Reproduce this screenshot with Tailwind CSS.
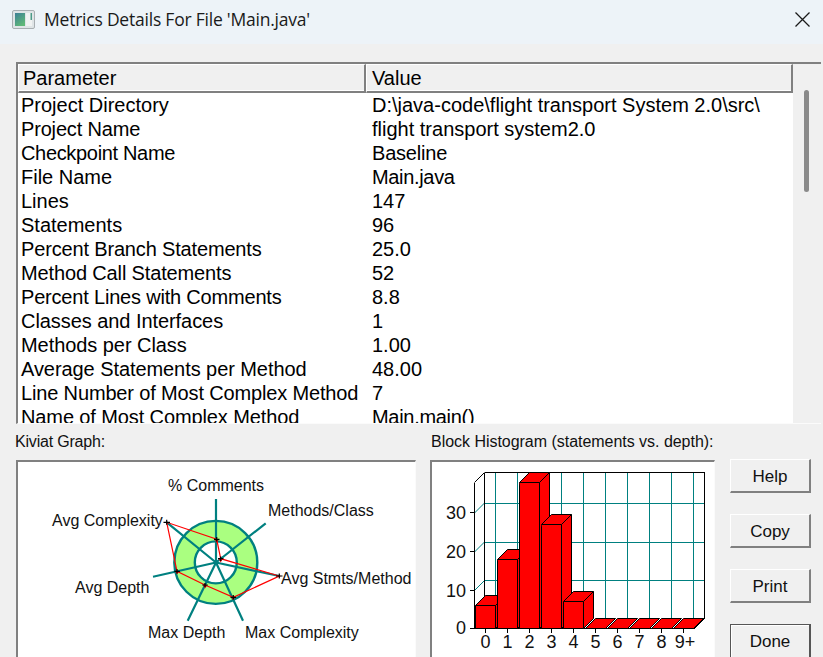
<!DOCTYPE html>
<html><head><meta charset="utf-8"><script src="https://cdn.jsdelivr.net/npm/@tailwindcss/browser@4"></script></head>
<body class="m-0">
<div class="w-[823px] h-[657px] overflow-hidden bg-[#f0f0f0] flex flex-col font-['Liberation_Sans',Arial,sans-serif] text-black">
  <div class="h-[44px] shrink-0 bg-[#edf3f8] flex items-center pl-[12px] pr-[13px] pb-[5px]">
    <svg class="w-[23px] h-[19px] shrink-0" viewBox="0 0 23 19">
      <defs><linearGradient id="g" x1="0" y1="0" x2="0.6" y2="1"><stop offset="0" stop-color="#3d7f96"/><stop offset="1" stop-color="#5fb878"/></linearGradient></defs>
      <rect x="0.5" y="0.5" width="22" height="18" rx="1.5" fill="#dfe4e6" stroke="#a8aeb2"/>
      <rect x="3" y="3" width="10" height="13" fill="url(#g)"/>
      <rect x="14" y="3" width="6" height="13" fill="#f0f2f2"/>
      <rect x="18.5" y="3" width="1.5" height="7" fill="#4b9a88"/>
    </svg>
    <span class="ml-[9px] text-[17.5px] leading-none font-['Open_Sans',sans-serif] text-[#1a1a1a] tracking-[-0.22px]">Metrics Details For File 'Main.java'</span>
    <svg class="ml-auto w-[15px] h-[15px]" viewBox="0 0 15 15"><path d="M0.5 0.5 L14.5 14.5 M14.5 0.5 L0.5 14.5" stroke="#1a1a1a" stroke-width="1.3" fill="none"/></svg>
  </div>
  <div class="pl-[16px] pt-[18px] flex flex-col">
    <div class="w-[805px] h-[362px] flex border-t-2 border-l-2 border-t-[#808080] border-l-[#808080] border-b border-b-[#fbfbfb] overflow-hidden">
      <div class="w-[775px] shrink-0 bg-white flex flex-col text-[20px]">
        <div class="grid grid-cols-[348px_1fr] h-[26px] bg-[#f0f0f0] shrink-0">
          <div class="border-t border-l border-white border-r-2 border-b-2 border-r-[#808080] border-b-[#808080] pl-[4px] leading-[26px]">Parameter</div>
          <div class="border-t border-l border-white border-r-2 border-b-2 border-r-[#808080] border-b-[#808080] pl-[5px] leading-[26px]">Value</div>
        </div>
        <div class="pt-[3px] grid grid-cols-[347px_1fr] auto-rows-[24px] leading-[24px] pl-[3px]">
          <div>Project Directory</div><div class="pl-[4px]">D:\java-code\flight transport System 2.0\src\</div>
          <div class="tracking-[-0.17px]">Project Name</div><div class="pl-[4px]">flight transport system2.0</div>
          <div class="tracking-[-0.33px]">Checkpoint Name</div><div class="pl-[4px] tracking-[-0.2px]">Baseline</div>
          <div>File Name</div><div class="pl-[4px] tracking-[-0.33px]">Main.java</div>
          <div>Lines</div><div class="pl-[4px]">147</div>
          <div>Statements</div><div class="pl-[4px]">96</div>
          <div class="tracking-[-0.16px]">Percent Branch Statements</div><div class="pl-[4px]">25.0</div>
          <div class="tracking-[-0.14px]">Method Call Statements</div><div class="pl-[4px]">52</div>
          <div class="tracking-[-0.19px]">Percent Lines with Comments</div><div class="pl-[4px]">8.8</div>
          <div class="tracking-[-0.06px]">Classes and Interfaces</div><div class="pl-[4px]">1</div>
          <div class="tracking-[-0.06px]">Methods per Class</div><div class="pl-[4px]">1.00</div>
          <div class="tracking-[-0.07px]">Average Statements per Method</div><div class="pl-[4px]">48.00</div>
          <div class="tracking-[-0.15px]">Line Number of Most Complex Method</div><div class="pl-[4px]">7</div>
          <div class="tracking-[-0.11px]">Name of Most Complex Method</div><div class="pl-[4px] tracking-[-0.3px]">Main.main()</div>
        </div>
      </div>
      <div class="flex-1 flex justify-center pl-[2px] pr-[1px] pt-[26px]">
        <div class="w-[5px] h-[102px] rounded-full bg-[#8a8a8a] ml-[-2px]"></div>
      </div>
    </div>
    <div class="flex text-[16px] text-[#111]">
      <div class="w-[400px] shrink-0">
        <div class="h-[36px] leading-[36px] -ml-[1px] tracking-[-0.2px]">Kiviat Graph:</div>
        <div class="h-[240px] border-t-2 border-l-2 border-t-[#808080] border-l-[#808080] border-r border-r-[#fbfbfb] bg-white">
          <svg class="block -mt-[2px] -ml-[2px]" width="400" height="200" viewBox="16 460 400 200" font-size="16" fill="#111" font-family="'Liberation Sans',Arial,sans-serif">
            <circle cx="215.8" cy="562.4" r="41.5" fill="#aaff80" stroke="#008080" stroke-width="2.4"/>
            <circle cx="215.8" cy="562.4" r="21" fill="#fff" stroke="#008080" stroke-width="2.4"/>
            <path d="M216 562.5 L216 499 M216 562.5 L265.7 523.3 M216 562.5 L279.3 576 M216 562.5 L243 620.7 M216 562.5 L187.7 620.7 M216 562.5 L153 576.7 M216 562.5 L166.7 522.3" stroke="#008080" stroke-width="2.2" fill="none"/>
            <polygon points="216.7,539.3 220.7,558.7 279.3,576 233.3,597.3 205,585 177,571.3 166.7,522.3" fill="none" stroke="#ff0000" stroke-width="1.2"/>
            <g fill="#f00000">
              <path d="M214.5 539L219 539L216.7 543Z M218.5 558.5L223 558.5L220.7 562.5Z M231 597L235.5 597L233.3 600Z M203 585L207.5 585L205 588.5Z M175 571L179.5 571L177 574.5Z"/>
            </g>
            <path d="M214 539.3 H219.5 M216.7 537 V541.5 M218 558.7 H223.5 M220.7 556.5 V561 M276 576 H282.5 M279.3 573.5 V578.5 M230.5 597.3 H236 M233.3 595 V599.5 M202.3 585 H207.8 M205 583 V587 M174.3 571.3 H179.8 M177 569 V573.5 M163.5 522.3 H170 M166.7 519.8 V524.8" fill="none" stroke="#000" stroke-width="1.2"/>
            <text x="168" y="491">% Comments</text>
            <text x="268" y="516">Methods/Class</text>
            <text x="52" y="526">Avg Complexity</text>
            <text x="281" y="584">Avg Stmts/Method</text>
            <text x="75" y="593">Avg Depth</text>
            <text x="148" y="638">Max Depth</text>
            <text x="245" y="638">Max Complexity</text>
          </svg>
        </div>
      </div>
      <div class="w-[285px] ml-[14px] shrink-0">
        <div class="h-[36px] leading-[36px] pl-[1px] tracking-[-0.03px]">Block Histogram (statements vs. depth):</div>
        <div class="h-[240px] border-t-2 border-l-2 border-t-[#808080] border-l-[#808080] border-r border-r-[#fbfbfb] bg-white">
          <svg class="block -mt-[2px] -ml-[2px]" width="285" height="200" viewBox="430 460 285 200" font-size="16" fill="#111" font-family="'Liberation Sans',Arial,sans-serif" shape-rendering="crispEdges">
            <g stroke="#008080" stroke-width="1" fill="none">
              <path d="M495.5 472V618 M517.5 472V618 M539.5 472V618 M561.5 472V618 M583.5 472V618 M605.5 472V618 M627.5 472V618 M649.5 472V618 M671.5 472V618 M693.5 472V618"/>
              <path d="M484 503.5H704 M484 542.5H704 M484 580.5H704"/>
            </g>
            <g stroke="#008080" stroke-width="1" fill="none" shape-rendering="auto">
              <path d="M474.5 513L484.5 503 M474.5 552L484.5 542 M474.5 590.5L484.5 580.5"/>
            </g>
            <g fill="none" stroke="#000" stroke-width="1">
              <path d="M484.5 472.5H704.5V618.5H694 M484.5 472.5V618"/>
              <path d="M474.5 482.5V628.5H694.5 M470 512.5H474.5 M470 551.5H474.5 M470 590.5H474.5 M470 628.5H474.5 M485.5 628V633 M507.5 628V633 M529.5 628V633 M551.5 628V633 M573.5 628V633 M595.5 628V633 M617.5 628V633 M639.5 628V633 M661.5 628V633 M683.5 628V633"/>
              <path shape-rendering="auto" d="M474.5 482.5L484.5 472.5 M694.5 628.5L704.5 618.5"/>
            </g>
            <g fill="#ff0000" stroke="#000" stroke-width="1" shape-rendering="geometricPrecision">
              <path d="M475.5 605.5L485.5 595.5H505.5V618.5L495.5 628.5H475.5Z"/><path d="M475.5 605.5H495.5V628.5 M495.5 605.5L505.5 595.5"/>
              <path d="M497.5 559.5L507.5 549.5H527.5V618.5L517.5 628.5H497.5Z"/><path d="M497.5 559.5H517.5V628.5 M517.5 559.5L527.5 549.5"/>
              <path d="M519.5 482.5L529.5 472.5H549.5V618.5L539.5 628.5H519.5Z"/><path d="M519.5 482.5H539.5V628.5 M539.5 482.5L549.5 472.5"/>
              <path d="M541.5 524.5L551.5 514.5H571.5V618.5L561.5 628.5H541.5Z"/><path d="M541.5 524.5H561.5V628.5 M561.5 524.5L571.5 514.5"/>
              <path d="M563.5 601.5L573.5 591.5H593.5V618.5L583.5 628.5H563.5Z"/><path d="M563.5 601.5H583.5V628.5 M583.5 601.5L593.5 591.5"/>
              <path d="M585.5 628.5L595.5 618.5H615.5L605.5 628.5Z"/>
              <path d="M607.5 628.5L617.5 618.5H637.5L627.5 628.5Z"/>
              <path d="M629.5 628.5L639.5 618.5H659.5L649.5 628.5Z"/>
              <path d="M651.5 628.5L661.5 618.5H681.5L671.5 628.5Z"/>
              <path d="M673.5 628.5L683.5 618.5H703.5L693.5 628.5Z"/>
            </g>
            <g font-size="18" text-anchor="end" shape-rendering="auto">
              <text x="466" y="519">30</text><text x="466" y="558">20</text><text x="466" y="597">10</text><text x="466" y="634">0</text>
            </g>
            <g font-size="18" text-anchor="middle" shape-rendering="auto">
              <text x="485.5" y="648">0</text><text x="507.5" y="648">1</text><text x="529.5" y="648">2</text><text x="551.5" y="648">3</text><text x="573.5" y="648">4</text><text x="595.5" y="648">5</text><text x="617.5" y="648">6</text><text x="639.5" y="648">7</text><text x="661.5" y="648">8</text><text x="685" y="648">9+</text>
            </g>
          </svg>
        </div>
      </div>
      <div class="w-[81px] ml-[15px] shrink-0 pt-[35px] flex flex-col gap-[21px]">
        <div class="h-[34px] shrink-0 flex items-center justify-center pt-[2px] border-t border-l border-t-white border-l-white border-r-2 border-b-2 border-r-[#808080] border-b-[#808080] text-[17px]">Help</div>
        <div class="h-[34px] shrink-0 flex items-center justify-center pt-[2px] border-t border-l border-t-white border-l-white border-r-2 border-b-2 border-r-[#808080] border-b-[#808080] text-[17px]">Copy</div>
        <div class="h-[34px] shrink-0 flex items-center justify-center pt-[2px] border-t border-l border-t-white border-l-white border-r-2 border-b-2 border-r-[#808080] border-b-[#808080] text-[17px]">Print</div>
        <div class="h-[36px] shrink-0 flex items-center justify-center border border-[#555] border-r-2 border-b-2 shadow-[inset_1px_1px_0_#fff] text-[17px]">Done</div>
      </div>
    </div>
  </div>
</div>
</body></html>
